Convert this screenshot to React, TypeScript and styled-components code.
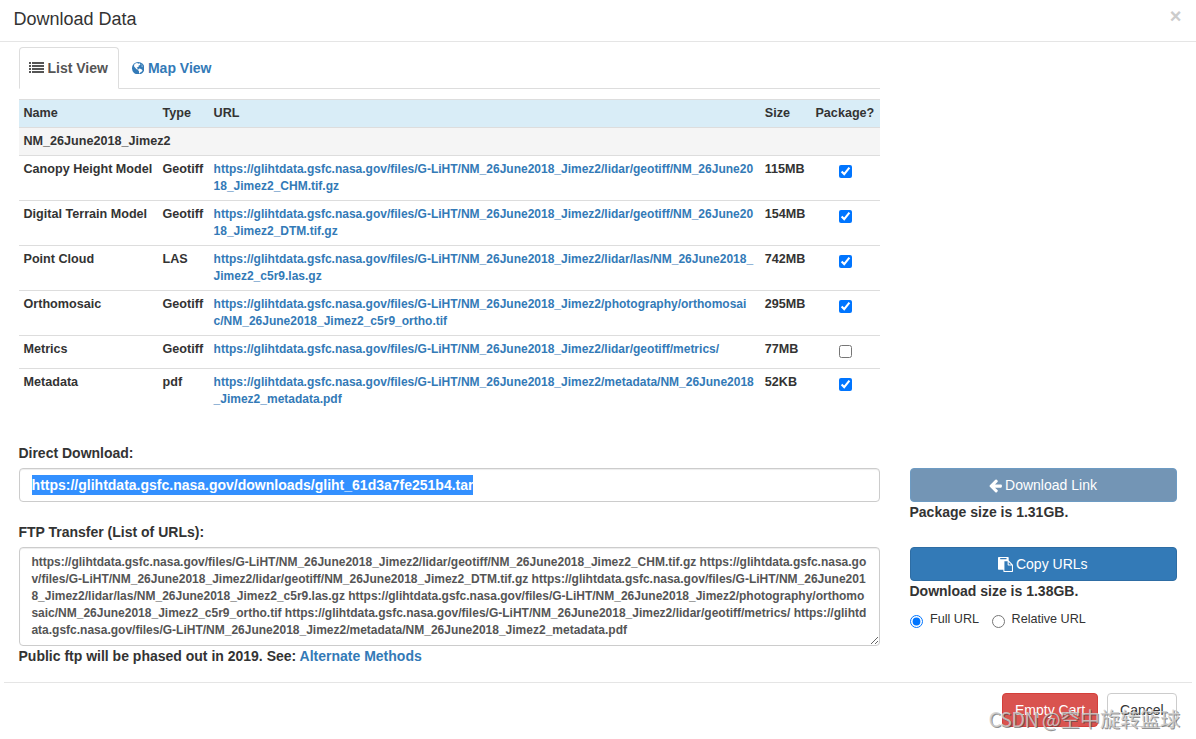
import React from "react";
import styled, { createGlobalStyle } from "styled-components";

const GlobalStyle = createGlobalStyle`
  *, *::before, *::after { box-sizing: border-box; }
  html, body { margin: 0; background: #fff; overflow: hidden; }
  body {
    font-family: "Liberation Sans", Arial, sans-serif;
    font-size: 14px;
    line-height: 20px;
    color: #333;
  }
`;

const Modal = styled.div`
  position: relative;
  width: 1196px;
  height: 739px;
  display: flex;
  flex-direction: column;
`;

const Header = styled.header`
  display: flex;
  justify-content: space-between;
  height: 42px;
  padding: 6px 14.5px 0 13.4px;
  border-bottom: 1px solid #e5e5e5;
`;

const Title = styled.h4`
  margin: 0;
  font-size: 18px;
  font-weight: 400;
  line-height: 26px;
`;

const CloseButton = styled.button`
  width: 12px;
  height: 20px;
  padding: 0;
  border: 0;
  background: none;
  color: #ccc;
  font: bold 20px/20px "Liberation Sans", Arial, sans-serif;
`;

const Body = styled.main`
  display: flex;
  flex-direction: column;
  height: 640px;
  padding: 5px 19px 0;
`;

const Tabs = styled.nav`
  display: flex;
  width: 861px;
  height: 42px;
  border-bottom: 1px solid #ddd;
`;

const Tab = styled.a<{ $active?: boolean }>`
  display: flex;
  align-items: center;
  gap: 3.5px;
  height: 42px;
  padding: 0 10.5px 0 ${(p) => (p.$active ? 9 : 11.5)}px;
  border: 1px solid ${(p) => (p.$active ? "#ddd" : "transparent")};
  border-bottom-color: ${(p) => (p.$active ? "#fff" : "transparent")};
  border-radius: 4px 4px 0 0;
  color: ${(p) => (p.$active ? "#555" : "#337ab7")};
  font-weight: 700;
`;

const FileTable = styled.section`
  width: 861px;
  height: 344px;
  margin-top: 10px;
  font-size: 12.6px;
  font-weight: 700;
  line-height: 17px;
`;

const TableRow = styled.div<{ $bg?: string; $height: number }>`
  display: grid;
  grid-template-columns: 139px 51.1px 551.2px 50.7px 69px;
  height: ${(p) => p.$height}px;
  border-top: 1px solid #ddd;
  background: ${(p) => p.$bg || "transparent"};
`;

const Cell = styled.div`
  padding: 5px 5px 4px 4.5px;
  white-space: nowrap;
`;

const UrlCell = styled(Cell)`
  font-size: 12px;
  line-height: 17.14px;
  white-space: normal;
  word-break: break-all;
`;

const CheckCell = styled.div`
  display: flex;
  justify-content: center;
  padding: 9px 0 0 0.5px;
`;

const Checkbox = styled.input`
  width: 13px;
  height: 13px;
  margin: 0;
`;

const Link = styled.a`
  color: #337ab7;
`;

const FormRow = styled.section`
  display: grid;
  grid-template-columns: 861px 267px;
  column-gap: 30px;
`;

const Field = styled.div`
  display: flex;
  flex-direction: column;
  font-weight: 700;
`;

const Label = styled.label`
  margin: 0 0 5px -0.6px;
`;

const Note = styled.span`
  display: block;
  margin-left: -0.5px;
`;

const LinkBox = styled.div`
  height: 34px;
  padding: 6px 12px 6px 11.6px;
  border: 1px solid #ccc;
  border-radius: 4px;
  box-shadow: inset 0 1px 1px rgba(0, 0, 0, 0.075);
`;

const Selection = styled.span`
  display: inline-block;
  width: 441.4px;
  height: 20px;
  background: #3390ff;
  color: #fff;
`;

const UrlArea = styled.textarea`
  display: block;
  width: 861px;
  height: 99px;
  margin: 0;
  padding: 6px 12px 6px 11.4px;
  border: 1px solid #ccc;
  border-radius: 4px;
  box-shadow: inset 0 1px 1px rgba(0, 0, 0, 0.075);
  color: #555;
  font: 700 12px/17px "Liberation Sans", Arial, sans-serif;
  word-break: break-all;
  overflow: hidden;
  resize: both;
`;

const Side = styled.div`
  padding-top: 25px;
  font-weight: 700;
`;

const Button = styled.button<{ $kind: "primary" | "danger" | "plain"; $dim?: boolean; $block?: boolean }>`
  display: flex;
  align-items: center;
  justify-content: center;
  gap: ${(p) => (p.$dim ? 2.5 : 3)}px;
  width: ${(p) => (p.$block ? "267px" : "auto")};
  height: 34px;
  padding: 0 ${(p) => (p.$block ? "13.5px" : "12.4px")} 0 ${(p) => (p.$block ? "12px" : "11.6px")};
  border: 1px solid
    ${(p) => (p.$kind === "danger" ? "#d43f3a" : p.$kind === "plain" ? "#ccc" : p.$dim ? "#6d9bc3" : "#2e6da4")};
  border-radius: 4px;
  background: ${(p) => (p.$kind === "danger" ? "#d9534f" : p.$kind === "plain" ? "#fff" : p.$dim ? "#7395b5" : "#337ab7")};
  color: ${(p) => (p.$kind === "plain" ? "#333" : "#fff")};
  font: 400 14px/20px "Liberation Sans", Arial, sans-serif;
`;

const Radios = styled.div`
  display: flex;
  gap: 12.6px;
  padding-top: 8px;
  font-size: 12.6px;
  line-height: 20px;
  font-weight: 400;
`;

const RadioLabel = styled.label`
  display: flex;
  gap: 7px;
`;

const Radio = styled.input`
  width: 13px;
  height: 13px;
  margin: 6px 0 0;
`;

const Footer = styled.footer`
  display: flex;
  justify-content: flex-end;
  gap: 9px;
  margin: 0 4px;
  padding: 10px 15px 0;
  border-top: 1px solid #e5e5e5;
`;

const Watermark = styled.div`
  position: absolute;
  right: 16px;
  bottom: 6px;
  font: 400 20px/28px "Noto Sans CJK SC", sans-serif;
  color: rgba(205, 205, 205, 0.85);
  text-shadow: 1px 1px 0 rgba(70, 70, 70, 0.6);
  white-space: nowrap;
  pointer-events: none;
`;

const WatermarkSite = styled.span`
  letter-spacing: -0.7px;
`;

const ListIcon = () => (
  <svg width="15" height="14" viewBox="0 0 15 14" fill="currentColor" shapeRendering="crispEdges">
    {[1, 4, 7, 10].map((y) => (
      <g key={y}>
        <rect x="0" y={y} width="2" height="2" />
        <rect x="3" y={y} width="12" height="2" />
      </g>
    ))}
  </svg>
);

const GlobeIcon = () => (
  <svg width="12.5" height="12.5" viewBox="0 0 12 12">
    <circle cx="6" cy="6" r="6" fill="currentColor" />
    <path
      d="M2 2.7 3.6 1.3 5.2 1l.6.7 1.4-.4.9.8-.7.9-1.1.4.2.8-1 .8-.9.3.2.7.9.5-.4.9-1.2-.6-1-1.3L2 4.2Z"
      fill="#fff"
    />
    <path d="m6.1 6.6 1.4-.4 1.6.8 1 .8-.6 1.3-1.3.7-.8 1.2-.7-.2.1-1.6-.8-1Z" fill="#fff" />
    <path d="m8.7 2 1.1.5.7 1.3.2 1-1 .2-.9-.7.4-1Z" fill="#fff" opacity=".35" />
  </svg>
);

const ArrowIcon = () => (
  <svg width="14" height="15" viewBox="0 0 1664 1792" fill="currentColor">
    <path d="M1536 896v128q0 53-32.500 90.500t-84.500 37.500h-704l293 294q38 36 38 90t-38 90l-75 76q-37 37-90 37-52 0-91-37l-651-652q-37-37-37-90 0-52 37-91l651-650q38-38 91-38 52 0 90 38l75 74q38 38 38 91t-38 91l-293 293h704q52 0 84.500 37.500t32.500 90.500z" />
  </svg>
);

const PasteIcon = () => (
  <svg width="15" height="15" viewBox="0 0 1792 1792" fill="currentColor">
    <path d="M768 1664h896v-640h-416q-40 0-68-28t-28-68v-416h-384v1152zm256-1440v-64q0-13-9.500-22.500t-22.500-9.500h-704q-13 0-22.500 9.500t-9.500 22.500v64q0 13 9.500 22.500t22.500 9.500h704q13 0 22.500-9.500t9.500-22.500zm256 672h299l-299-299v299zm512 128v672q0 40-28 68t-68 28h-960q-40 0-68-28t-28-68v-160h-544q-40 0-68-28t-28-68v-1344q0-40 28-68t68-28h1088q40 0 68 28t28 68v328q21 13 36 28l408 408q28 28 48 76t20 88z" />
  </svg>
);

const BASE = "https://glihtdata.gsfc.nasa.gov/files/G-LiHT/NM_26June2018_Jimez2/";

const files = [
  { name: "Canopy Height Model", type: "Geotiff", path: "lidar/geotiff/NM_26June2018_Jimez2_CHM.tif.gz", size: "115MB", checked: true, height: 45 },
  { name: "Digital Terrain Model", type: "Geotiff", path: "lidar/geotiff/NM_26June2018_Jimez2_DTM.tif.gz", size: "154MB", checked: true, height: 45 },
  { name: "Point Cloud", type: "LAS", path: "lidar/las/NM_26June2018_Jimez2_c5r9.las.gz", size: "742MB", checked: true, height: 45 },
  { name: "Orthomosaic", type: "Geotiff", path: "photography/orthomosaic/NM_26June2018_Jimez2_c5r9_ortho.tif", size: "295MB", checked: true, height: 45 },
  { name: "Metrics", type: "Geotiff", path: "lidar/geotiff/metrics/", size: "77MB", checked: false, height: 33 },
  { name: "Metadata", type: "pdf", path: "metadata/NM_26June2018_Jimez2_metadata.pdf", size: "52KB", checked: true, height: 45 },
];

export default function App() {
  return (
    <Modal>
      <GlobalStyle />
      <Header>
        <Title>Download Data</Title>
        <CloseButton>×</CloseButton>
      </Header>
      <Body>
        <Tabs>
          <Tab $active>
            <ListIcon />
            List View
          </Tab>
          <Tab>
            <GlobeIcon />
            Map View
          </Tab>
        </Tabs>
        <FileTable>
          <TableRow $height={28} $bg="#d9edf7">
            <Cell>Name</Cell>
            <Cell>Type</Cell>
            <Cell>URL</Cell>
            <Cell>Size</Cell>
            <Cell>Package?</Cell>
          </TableRow>
          <TableRow $height={28} $bg="#f5f5f5">
            <Cell>NM_26June2018_Jimez2</Cell>
          </TableRow>
          {files.map((f) => (
            <TableRow key={f.name} $height={f.height}>
              <Cell>{f.name}</Cell>
              <Cell>{f.type}</Cell>
              <UrlCell>
                <Link>{BASE + f.path}</Link>
              </UrlCell>
              <Cell>{f.size}</Cell>
              <CheckCell>
                <Checkbox type="checkbox" defaultChecked={f.checked} />
              </CheckCell>
            </TableRow>
          ))}
        </FileTable>
        <FormRow>
          <Field>
            <Label>Direct Download:</Label>
            <LinkBox>
              <Selection>https://glihtdata.gsfc.nasa.gov/downloads/gliht_61d3a7fe251b4.tar</Selection>
            </LinkBox>
          </Field>
          <Side>
            <Button $kind="primary" $dim $block>
              <ArrowIcon />
              Download Link
            </Button>
            <Note>Package size is 1.31GB.</Note>
          </Side>
        </FormRow>
        <FormRow>
          <Field>
            <Label>FTP Transfer (List of URLs):</Label>
            <UrlArea readOnly value={files.map((f) => BASE + f.path).join(" ")} />
            <Note>
              Public ftp will be phased out in 2019. See: <Link>Alternate Methods</Link>
            </Note>
          </Field>
          <Side>
            <Button $kind="primary" $block>
              <PasteIcon />
              Copy URLs
            </Button>
            <Note>Download size is 1.38GB.</Note>
            <Radios>
              <RadioLabel>
                <Radio type="radio" name="urlType" defaultChecked />
                Full URL
              </RadioLabel>
              <RadioLabel>
                <Radio type="radio" name="urlType" />
                Relative URL
              </RadioLabel>
            </Radios>
          </Side>
        </FormRow>
      </Body>
      <Footer>
        <Button $kind="danger">Empty Cart</Button>
        <Button $kind="plain">Cancel</Button>
      </Footer>
      <Watermark>
        <WatermarkSite>CSDN @</WatermarkSite>空中旋转篮球
      </Watermark>
    </Modal>
  );
}
